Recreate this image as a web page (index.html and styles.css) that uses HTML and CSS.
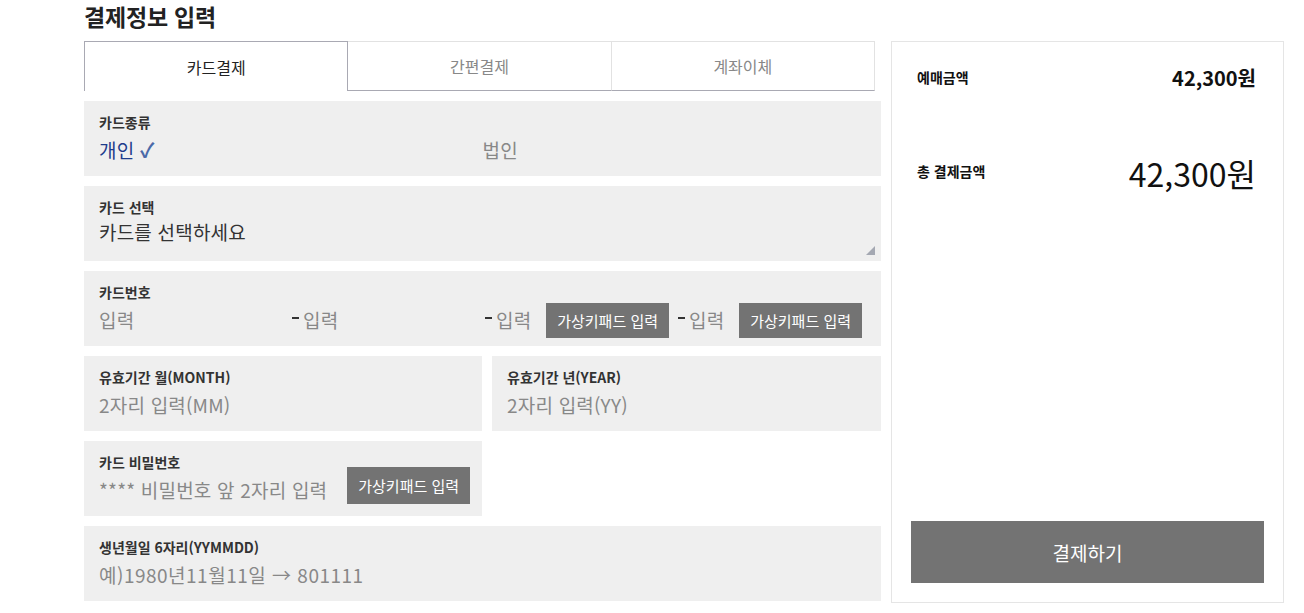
FILE: index.html
```html
<!DOCTYPE html>
<html lang="ko">
<head>
<meta charset="utf-8">
<title>결제정보 입력</title>
<link rel="stylesheet" href="styles.css">
</head>
<body>
<div class="page">
  <div class="main">
    <h2 class="title">결제정보 입력</h2>
    <div class="tabs">
      <div class="tab active">카드결제</div>
      <div class="tab">간편결제</div>
      <div class="tab">계좌이체</div>
    </div>

    <div class="row">
      <div class="label">카드종류</div>
      <div class="value two">
        <span class="chosen">개인 <span class="check">✓</span></span>
        <span class="ph">법인</span>
      </div>
    </div>

    <div class="row select-row">
      <div class="label">카드 선택</div>
      <div class="value"><span class="dark">카드를 선택하세요</span></div>
      <span class="resize"></span>
    </div>

    <div class="row">
      <div class="label">카드번호</div>
      <div class="value cardnum">
        <div class="seg"><span class="ph">입력</span></div>
        <div class="seg"><span class="dash"></span><span class="ph">입력</span></div>
        <div class="seg"><span class="dash"></span><span class="ph">입력</span><span class="kbtn">가상키패드 입력</span></div>
        <div class="seg"><span class="dash"></span><span class="ph">입력</span><span class="kbtn">가상키패드 입력</span></div>
      </div>
    </div>

    <div class="split">
      <div class="row">
        <div class="label">유효기간 월(MONTH)</div>
        <div class="value"><span class="ph">2자리 입력(MM)</span></div>
      </div>
      <div class="row">
        <div class="label">유효기간 년(YEAR)</div>
        <div class="value"><span class="ph">2자리 입력(YY)</span></div>
      </div>
    </div>

    <div class="split">
      <div class="row pw-row">
        <div class="label">카드 비밀번호</div>
        <div class="value pw"><span class="ph">**** 비밀번호 앞 2자리 입력</span><span class="kbtn kbtn-pw">가상키패드 입력</span></div>
      </div>
    </div>

    <div class="row">
      <div class="label">생년월일 6자리(YYMMDD)</div>
      <div class="value"><span class="ph birth">예)1980년11월11일 → 801111</span></div>
    </div>
  </div>

  <aside class="side">
    <div class="sum-row">
      <span class="sum-label">예매금액</span>
      <span class="sum-value">42,300원</span>
    </div>
    <div class="sum-row total">
      <span class="sum-label">총 결제금액</span>
      <span class="sum-value big">42,300원</span>
    </div>
    <div class="spacer"></div>
    <div class="pay-btn">결제하기</div>
  </aside>
</div>
</body>
</html>
```

FILE: styles.css
```css
* { box-sizing: border-box; }
html, body { margin: 0; padding: 0; background: #fff; }
body {
  font-family: "Noto Sans CJK KR", "Noto Sans", sans-serif;
  color: #333;
}
.page {
  display: flex;
  gap: 10px;
  padding-left: 84px;
  width: 1304px;
  height: 613px;
}
.main {
  width: 797px;
  display: flex;
  flex-direction: column;
}
.title {
  margin: 0;
  height: 41px;
  font-size: 23px;
  font-weight: 700;
  line-height: 32px;
  color: #222;
  letter-spacing: -0.2px;
}
.tabs {
  display: flex;
  width: 791px;
  height: 50px;
  margin-bottom: 10px;
}
.tab {
  flex: 1;
  display: flex;
  align-items: center;
  justify-content: center;
  font-size: 16px;
  color: #888;
  border-top: 1px solid #e2e2e2;
  border-right: 1px solid #e2e2e2;
  border-bottom: 1px solid #a9a9b3;
}
.tab.active {
  color: #222;
  border: 1px solid #a9a9b3;
  border-bottom: none;
}
.row {
  position: relative;
  background: #efefef;
  height: 75px;
  padding: 11px 15px 0;
  margin-bottom: 10px;
}
.label {
  font-size: 14px;
  font-weight: 700;
  line-height: 20px;
  color: #333;
}
.value {
  margin-top: 3px;
  height: 30px;
  font-size: 19px;
  letter-spacing: 0.2px;
  line-height: 30px;
  color: #888;
  display: flex;
  align-items: center;
  white-space: nowrap;
}
.value.two > span { width: 384px; }
.chosen { color: #1e3c8c; }
.check { color: #4a69a8; font-size: 20px; font-weight: 700; }
.ph { color: #888; white-space: nowrap; }
.ph.birth { letter-spacing: 0.5px; }
.dark { color: #333; }
.select-row .value { margin-top: 0; }
.resize {
  position: absolute;
  right: 6px;
  bottom: 6px;
  width: 0;
  height: 0;
  border-left: 9px solid transparent;
  border-bottom: 9px solid #a4a8b2;
}
.cardnum {
  display: grid;
  grid-template-columns: 193px 193px 193px 1fr;
}
.seg {
  display: flex;
  align-items: center;
  height: 30px;
}
.dash {
  display: inline-block;
  width: 7px;
  height: 2px;
  background: #333;
  margin-right: 4px;
  margin-top: -4px;
}
.kbtn {
  margin-left: auto;
  margin-right: 9px;
  background: #737373;
  color: #fff;
  font-size: 15px;
  letter-spacing: 0;
  line-height: 35px;
  height: 35px;
  padding: 0 11px;
  white-space: nowrap;
  flex-shrink: 0;
}
.seg:last-child .kbtn { margin-right: 4px; }
.split {
  display: grid;
  grid-template-columns: 398px 389px;
  gap: 10px;
}
.split .row { padding-right: 12px; }
.split .pw-row { padding-right: 0; }
.pw .ph { flex-shrink: 0; }
.pw .kbtn-pw {
  margin-left: 20px;
  margin-right: 0;
  margin-top: -9px;
  height: 37px;
  line-height: 37px;
}
.side {
  width: 393px;
  height: 562px;
  margin-top: 41px;
  border: 1px solid #e5e5e5;
  padding: 0 19px 19px;
  display: flex;
  flex-direction: column;
}
.sum-row {
  display: flex;
  justify-content: space-between;
  align-items: center;
  padding: 0 8px 0 6px;
  height: 30px;
  margin-top: 20px;
}
.sum-label {
  font-size: 14px;
  font-weight: 700;
  color: #111;
}
.sum-value {
  font-size: 20px;
  font-weight: 700;
  color: #111;
}
.total {
  margin-top: 61px;
  height: 40px;
}
.total .sum-label { margin-top: -4px; }
.sum-value.big {
  font-size: 32px;
  font-weight: 400;
  color: #111;
}
.spacer { flex: 1; }
.pay-btn {
  height: 62px;
  background: #737373;
  color: #fff;
  font-size: 19px;
  display: flex;
  align-items: center;
  justify-content: center;
}
```
